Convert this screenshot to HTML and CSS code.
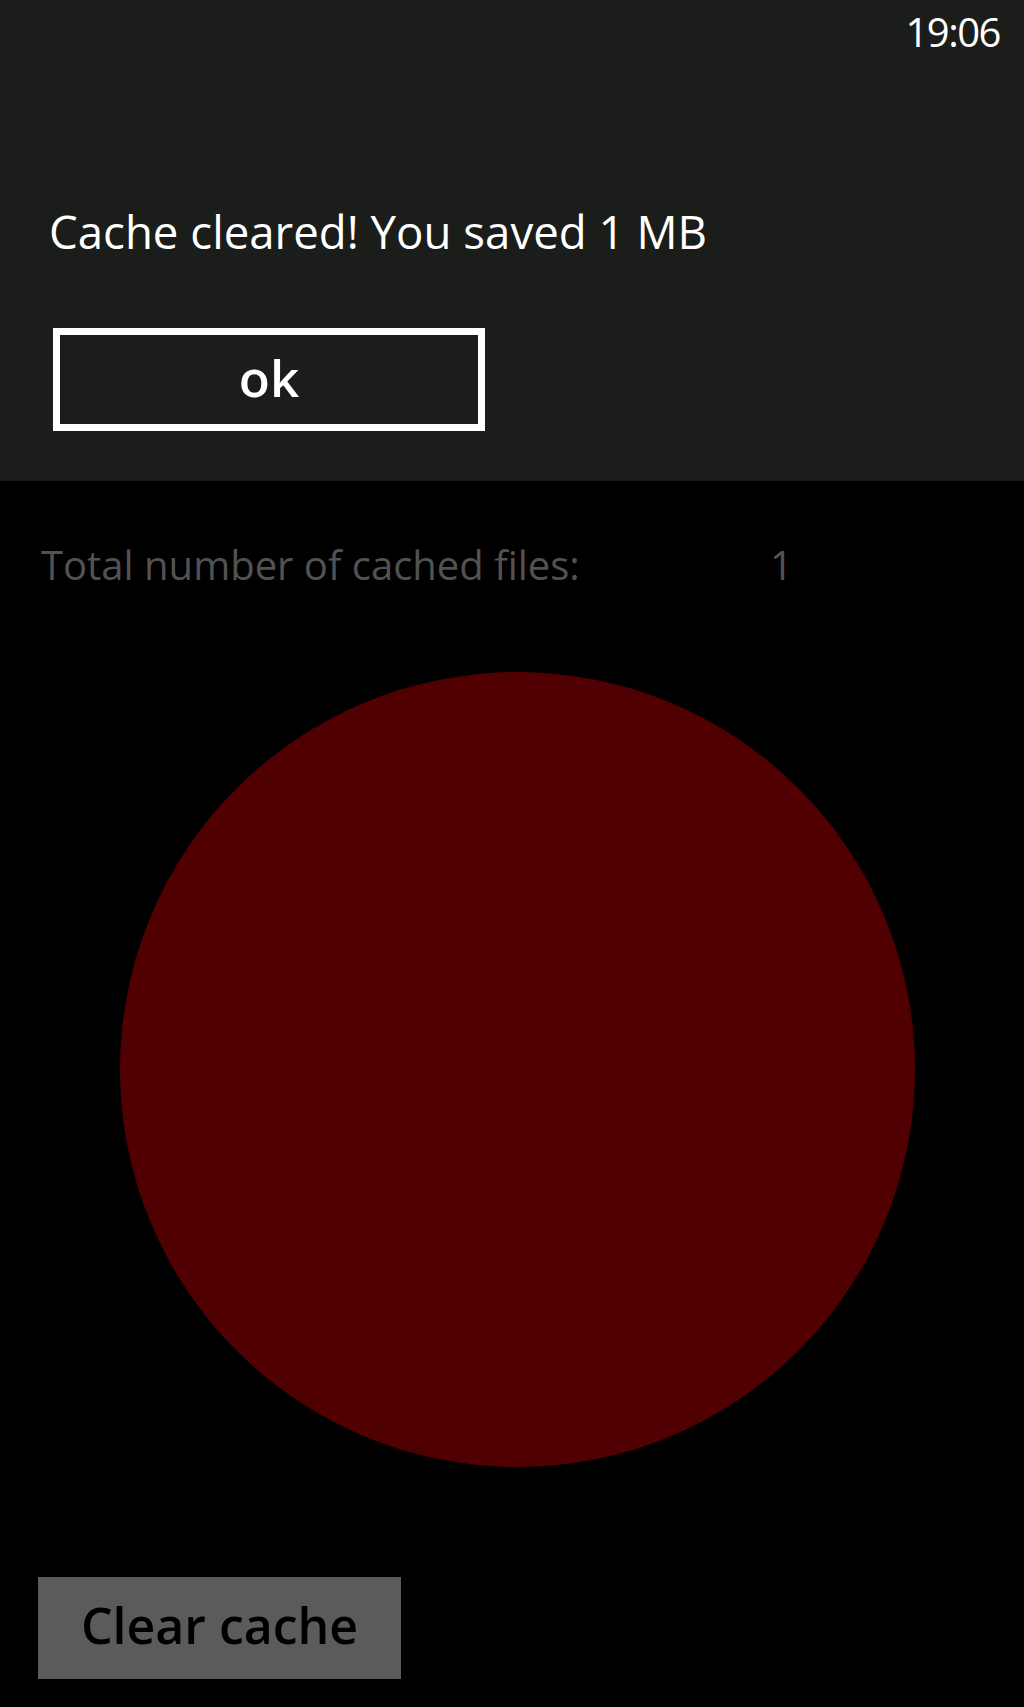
FILE: index.html
```html
<!DOCTYPE html>
<html lang="en">
<head>
<meta charset="utf-8">
<title>Cache cleaner</title>
<link rel="stylesheet" href="styles.css">
</head>
<body>
<div class="dialog">
  <div class="status-bar"><span class="clock">19:06</span></div>
  <p class="message">Cache cleared! You saved 1 MB</p>
  <button class="ok-button" type="button">ok</button>
</div>
<main class="content">
  <div class="stat-row">
    <span class="stat-label">Total number of cached files:</span>
    <span class="stat-value">1</span>
  </div>
  <div class="pie"></div>
  <button class="clear-button" type="button">Clear cache</button>
</main>
</body>
</html>
```

FILE: styles.css
```css
html, body {
  margin: 0;
  padding: 0;
  background: #000;
}

body {
  width: 1024px;
  height: 1707px;
  overflow: hidden;
  font-family: "Open Sans", "Noto Sans", sans-serif;
}

.dialog {
  box-sizing: border-box;
  height: 481px;
  background: #1a1d1a;
  padding: 12px 24px 0 49px;
  display: flex;
  flex-direction: column;
  align-items: flex-start;
}

.status-bar {
  align-self: stretch;
  display: flex;
  justify-content: flex-end;
}

.clock {
  color: #fff;
  font-size: 40px;
  line-height: 40px;
  letter-spacing: -1.5px;
}

.message {
  margin: 149px 0 0 0;
  color: #fff;
  font-size: 45.6px;
  line-height: 60px;
}

.ok-button {
  box-sizing: border-box;
  margin: 67px 0 0 4px;
  width: 432px;
  height: 103px;
  border: 7px solid #fff;
  background: transparent;
  color: #fff;
  font-family: inherit;
  font-size: 51px;
  font-weight: 600;
  line-height: 85px;
  padding: 0 0 4px 0;
}

.content {
  display: flex;
  flex-direction: column;
  align-items: flex-start;
  padding: 0 0 0 41px;
}

.stat-row {
  margin-top: 57px;
  display: grid;
  grid-template-columns: 729px auto;
  color: #525252;
  font-size: 40px;
  line-height: 54px;
}

.pie {
  margin: 80px 0 0 79px;
  width: 795px;
  height: 795px;
  border-radius: 50%;
  background: #500000;
}

.clear-button {
  box-sizing: border-box;
  margin: 110px 0 0 -3px;
  width: 363px;
  height: 102px;
  border: none;
  background: #5a5c5a;
  color: #000;
  font-family: inherit;
  font-size: 50px;
  font-weight: 600;
  line-height: 96px;
  padding: 0 0 6px 0;
}
```
